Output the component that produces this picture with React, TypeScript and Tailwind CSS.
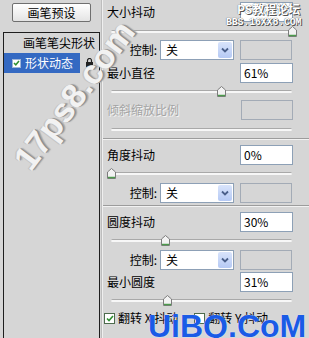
import React from 'react'

const font = "font-['Noto_Sans_CJK_SC','Noto_Sans',sans-serif]"

const Thumb = () => (
  <svg width="9" height="11" viewBox="0 0 9 11" className="block">
    <path d="M0.5 4 L4.5 0.5 L8.5 4 V10.5 H0.5 Z" fill="#f2f2f2" stroke="#7c7c7c" />
    <path d="M1 9.5 H8" stroke="#4c9a4c" strokeWidth="1.5" />
  </svg>
)

const Slider = ({ pct, thumb = true }: { pct: number; thumb?: boolean }) => (
  <div className="relative h-[14px] ml-[4px] w-[181px]">
    <div className="absolute left-0 right-0 top-[6px] h-[3px] rounded-full border-t border-[#a9a9a9] bg-[#f7f7f7]" />
    {thumb && (
      <div className="absolute top-[2px]" style={{ left: `${pct * 181 - 4.5}px` }}>
        <Thumb />
      </div>
    )}
  </div>
)

const Box = ({ children, disabled }: { children?: React.ReactNode; disabled?: boolean }) => (
  <div
    className={
      disabled
        ? 'h-[20px] w-[52px] border border-[#a3abb6] bg-[#d6d6d6]'
        : 'flex h-[20px] w-[53px] items-center border border-[#8da0b6] bg-white pl-[3px] text-[12px] leading-none'
    }
  >
    {children}
  </div>
)

const Select = () => (
  <div className="flex h-[20px] w-[74px] items-center justify-between border border-[#8da0b6] bg-white pl-[5px] pr-[1px]">
    <span className="text-[12px] leading-none">关</span>
    <div className="flex h-[16px] w-[14px] items-center justify-center rounded-[2px] bg-gradient-to-b from-[#d9e4fb] to-[#b5c9f4]">
      <svg width="8" height="6" viewBox="0 0 8 6">
        <path d="M1 1.5 L4 4.5 L7 1.5" fill="none" stroke="#4a5f8a" strokeWidth="1.8" />
      </svg>
    </div>
  </div>
)

const ControlRow = () => (
  <div className="flex h-[20px] items-center">
    <span className="w-[51px] pr-[1px] text-right text-[12px] leading-none">控制:</span>
    <div className="ml-[2px]">
      <Select />
    </div>
    <div className="ml-[6px]">
      <Box disabled />
    </div>
  </div>
)

const LabelRow = ({ label, value, disabled }: { label: string; value?: string; disabled?: boolean }) => (
  <div className="flex h-[20px] items-center justify-between">
    <span
      className={
        disabled
          ? 'text-[12px] leading-none text-[#a4a4a4] [text-shadow:1px_1px_0_#f4f4f4]'
          : 'text-[12px] leading-none'
      }
    >
      {label}
    </span>
    <Box disabled={disabled}>{value}</Box>
  </div>
)

const Separator = () => (
  <div className="h-[2px] border-t border-[#9c9c9c] bg-[#f2f2f2] -ml-[4px] -mr-[16px]" />
)

const Check = ({ checked }: { checked?: boolean }) => (
  <div className="flex h-[11px] w-[11px] items-center justify-center border border-[#4d6b4d] bg-white">
    {checked && (
      <svg width="8" height="7" viewBox="0 0 8 7">
        <path d="M1 3.5 L3 5.5 L7 1" fill="none" stroke="#2f8f2f" strokeWidth="1.6" />
      </svg>
    )}
  </div>
)

export default function App() {
  return (
    <div className={`relative h-[338px] w-[309px] overflow-hidden bg-[#d6d6d6] text-black ${font}`}>
      <div className="flex h-full">
        {/* left: presets + list */}
        <div className="flex w-[101px] flex-col">
          <div className="ml-[12px] mt-[3px] flex h-[19px] w-[79px] items-center justify-center rounded-[2px] border border-[#6f6f6f] bg-gradient-to-b from-white to-[#e4e4e4] text-[12px] leading-none">
            画笔预设
          </div>
          <div className="ml-[3px] mt-[10px] flex-1 border-l border-r border-t border-[#1e1e1e] w-[97px] overflow-hidden">
            <div className="flex h-[20px] items-center whitespace-nowrap pl-[19px] text-[12px] leading-none">
              画笔笔尖形状
            </div>
            <div className="flex h-[20px] items-center">
              <div className="flex h-[20px] w-[76px] items-center bg-[#3469c2] pl-[8px] text-[12px] leading-none text-white">
                <div className="flex h-[9px] w-[9px] items-center justify-center border border-[#9fb5d8] bg-white">
                  <svg width="7" height="6" viewBox="0 0 7 6">
                    <path d="M1 3 L2.8 4.8 L6 1" fill="none" stroke="#2f8f2f" strokeWidth="1.5" />
                  </svg>
                </div>
                <span className="ml-[4px]">形状动态</span>
              </div>
              <svg width="9" height="10" viewBox="0 0 9 10" className="ml-[5px]">
                <path d="M2.5 4 V2.5 a2 2 0 0 1 4 0 V4" fill="none" stroke="#222" strokeWidth="1.2" />
                <rect x="1" y="4" width="7" height="5.5" fill="#222" />
              </svg>
            </div>
          </div>
        </div>
        <div className="w-[1px] bg-[#bdbdbd]" />
        <div className="w-[1px] bg-[#efefef]" />

        {/* right: options */}
        <div className="flex-1 pl-[4px] pr-[16px]">
          <div className="mt-[2px] flex h-[20px] items-center justify-between">
            <span className="text-[12px] leading-none">大小抖动</span>
            <Box />
          </div>
          <div className="mt-[2px]">
            <Slider pct={1} />
          </div>
          <div className="mt-[2px]">
            <ControlRow />
          </div>
          <div className="mt-[3px]">
            <LabelRow label="最小直径" value="61%" />
          </div>
          <div className="mt-[1px]">
            <Slider pct={0.61} />
          </div>
          <div className="mt-[2px]">
            <LabelRow label="倾斜缩放比例" disabled />
          </div>
          <div className="mt-[2px]">
            <Slider pct={0} thumb={false} />
          </div>
          <div className="mt-[2px]">
            <Separator />
          </div>
          <div className="mt-[5px]">
            <LabelRow label="角度抖动" value="0%" />
          </div>
          <div className="mt-[1px]">
            <Slider pct={0} />
          </div>
          <div className="mt-[3px]">
            <ControlRow />
          </div>
          <div className="mt-[2px]">
            <Separator />
          </div>
          <div className="mt-[5px]">
            <LabelRow label="圆度抖动" value="30%" />
          </div>
          <div className="mt-[1px]">
            <Slider pct={0.3} />
          </div>
          <div className="mt-[3px]">
            <ControlRow />
          </div>
          <div className="mt-[2px]">
            <LabelRow label="最小圆度" value="31%" />
          </div>
          <div className="mt-[1px]">
            <Slider pct={0.31} />
          </div>
          <div className="mt-[4px] -ml-[3px] flex h-[14px] items-center text-[12px] leading-none">
            <Check checked />
            <span className="ml-[3px]">翻转 X 抖动</span>
            <div className="ml-[16px]">
              <Check />
            </div>
            <span className="ml-[3px]">翻转 Y 抖动</span>
          </div>
        </div>
      </div>

      {/* watermarks */}
      <div className="pointer-events-none absolute left-[237px] top-[3px] text-[12px] font-bold leading-none text-white [text-shadow:0_0_1px_#444,1px_1px_0_#555]">
        PS教程论坛
      </div>
      <div className="pointer-events-none absolute left-[226px] top-[18px] font-['Liberation_Mono',monospace] text-[10px] font-bold leading-none tracking-[-0.2px] text-white [text-shadow:0_0_1px_#333,1px_1px_0_#555]">
        BBS.16XX8.COM
      </div>
      <div className="pointer-events-none absolute left-[74px] top-[95px] -translate-x-1/2 -translate-y-1/2 -rotate-[53deg] whitespace-nowrap font-['Liberation_Sans',sans-serif] text-[34px] font-bold leading-none text-[#f2f2f2] [text-shadow:-1px_-1px_0_#c4c4c4,1px_1px_0_#8c8c8c,2px_2px_1px_#a8a8a8]">
        17ps8.com
      </div>
      <div className="pointer-events-none absolute left-[148px] top-[310px] font-['Liberation_Sans',sans-serif] text-[32px] font-bold leading-none text-[#1a5be6] [text-shadow:0_0_1px_#ffffff]">
        UiBQ.CoM
      </div>
    </div>
  )
}
